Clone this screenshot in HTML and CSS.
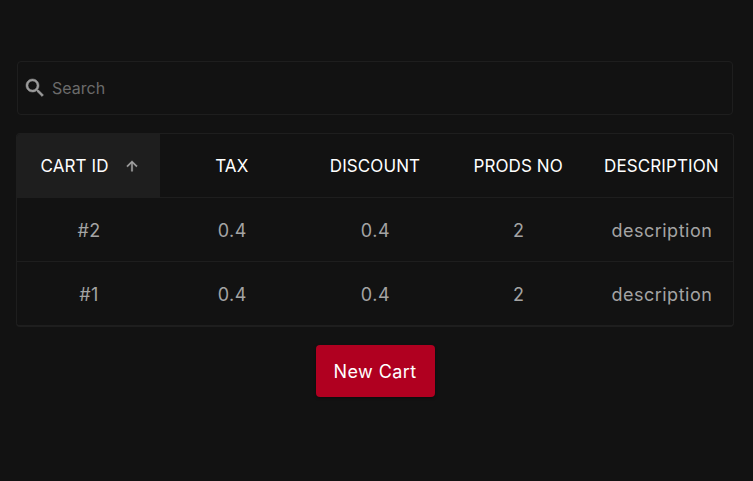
FILE: index.html
```html
<!DOCTYPE html>
<html lang="en">
<head>
<meta charset="utf-8">
<title>Carts</title>
<link rel="stylesheet" href="styles.css">
</head>
<body>
<main class="page">
  <label class="search">
    <svg class="search-icon" viewBox="0 0 24 24" width="24" height="24" aria-hidden="true"><path d="M15.5 14h-.79l-.28-.27C15.41 12.59 16 11.11 16 9.5 16 5.91 13.09 3 9.5 3S3 5.91 3 9.5 5.91 16 9.5 16c1.61 0 3.09-.59 4.23-1.57l.27.28v.79l5 4.99L20.49 19l-4.99-5zm-6 0C7.01 14 5 11.99 5 9.5S7.01 5 9.5 5 14 7.01 14 9.5 11.99 14 9.5 14z"/></svg>
    <input class="search-input" type="text" placeholder="Search">
  </label>
  <div class="table-card">
    <table class="table">
      <thead>
        <tr>
          <th class="sorted"><span class="sort-label">CART ID<svg class="sort-icon" viewBox="0 0 24 24" width="18" height="18" aria-hidden="true"><path d="M4 12l1.41 1.41L11 7.83V20h2V7.83l5.58 5.59L20 12l-8-8-8 8z"/></svg></span></th>
          <th>TAX</th>
          <th>DISCOUNT</th>
          <th>PRODS NO</th>
          <th>DESCRIPTION</th>
        </tr>
      </thead>
      <tbody>
        <tr><td>#2</td><td>0.4</td><td>0.4</td><td>2</td><td>description</td></tr>
        <tr><td>#1</td><td>0.4</td><td>0.4</td><td>2</td><td>description</td></tr>
      </tbody>
    </table>
  </div>
  <div class="actions"><button class="new-cart" type="button">New Cart</button></div>
</main>
</body>
</html>
```
FILE: styles.css
```css
* { box-sizing: border-box; }
html, body { margin: 0; height: 100%; }
body {
  background: #121212;
  color: #fff;
  font-family: "Inter", "Open Sans", sans-serif;
  overflow: hidden;
}
.page { padding: 61px 20px 0 17px; }
.search {
  display: flex;
  align-items: center;
  height: 54px;
  padding-left: 5px;
  border: 1px solid #1e1e1e;
  border-radius: 4px;
}
.search-icon { fill: #9a9a9a; stroke: #9a9a9a; stroke-width: .5; flex: none; }
.search-input {
  flex: 1;
  margin-left: 5px;
  background: none;
  border: 0;
  outline: 0;
  padding: 0;
  color: #fff;
  font: 400 16px "Inter", sans-serif;
}
.search-input::placeholder { color: #6b6b6b; opacity: 1; }
.table-card {
  margin: 18px -1px 0;
  border: 1px solid #1e1e1e;
  border-bottom-width: 2px;
  border-radius: 4px;
  overflow: hidden;
}
.table { width: 100%; border-collapse: separate; border-spacing: 0; table-layout: fixed; }
th, td {
  height: 64px;
  padding: 0;
  text-align: center;
  font-weight: 400;
}
th { color: #fff; border-bottom: 1px solid #1e1e1e; font-size: 17px; letter-spacing: .1px; }
td { color: #a4a4a4; font-size: 18px; letter-spacing: .5px; padding: 1px 0 0 1px; }
tbody tr:first-child td { border-bottom: 1px solid #1e1e1e; }
tbody tr:last-child td { height: 63px; }
.sorted { background: #1e1e1e; }
.sort-label { display: inline-flex; align-items: center; gap: 15px; padding-left: 3px; }
.sort-icon { fill: #a5a5a5; stroke: #a5a5a5; stroke-width: .6; width: 16px; height: 16px; }
.actions { display: flex; justify-content: center; margin-top: 18px; }
.new-cart {
  width: 119px;
  height: 52px;
  background: #b00020;
  color: #fff;
  border: 0;
  border-radius: 4px;
  font: 400 18px "Inter", sans-serif;
  letter-spacing: .4px;
  box-shadow: 0 1px 3px rgba(0,0,0,.4);
}
```
